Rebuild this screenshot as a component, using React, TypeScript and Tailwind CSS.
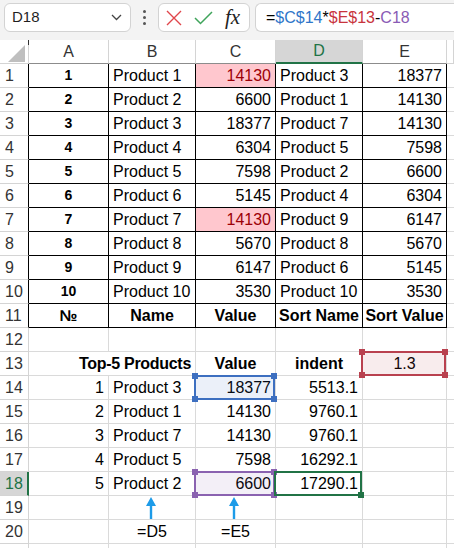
import React from "react";

type HL = "red" | "blue" | "purple" | "active";
type CellDef = {
  t?: React.ReactNode;
  align?: "l" | "c" | "r";
  bold?: boolean;
  small?: boolean;
  pink?: boolean;
  hl?: HL;
  noRight?: boolean;
  arrow?: number;
  tight?: boolean;
};

const products = [
  ["1", "Product 1", "14130", "Product 3", "18377"],
  ["2", "Product 2", "6600", "Product 1", "14130"],
  ["3", "Product 3", "18377", "Product 7", "14130"],
  ["4", "Product 4", "6304", "Product 5", "7598"],
  ["5", "Product 5", "7598", "Product 2", "6600"],
  ["6", "Product 6", "5145", "Product 4", "6304"],
  ["7", "Product 7", "14130", "Product 9", "6147"],
  ["8", "Product 8", "5670", "Product 8", "5670"],
  ["9", "Product 9", "6147", "Product 6", "5145"],
  ["10", "Product 10", "3530", "Product 10", "3530"],
];

const top5 = [
  ["1", "Product 3", "18377", "5513.1"],
  ["2", "Product 1", "14130", "9760.1"],
  ["3", "Product 7", "14130", "9760.1"],
  ["4", "Product 5", "7598", "16292.1"],
  ["5", "Product 2", "6600", "17290.1"],
];

function buildRows(): CellDef[][] {
  const rows: CellDef[][] = [];
  products.forEach((p) => {
    rows.push([
      { t: p[0], align: "c", bold: true, small: true },
      { t: p[1], align: "l" },
      { t: p[2], align: "r", pink: p[2] === "14130" },
      { t: p[3], align: "l" },
      { t: p[4], align: "r" },
    ]);
  });
  rows.push([
    { t: "№", align: "c", bold: true },
    { t: "Name", align: "c", bold: true },
    { t: "Value", align: "c", bold: true },
    { t: "Sort Name", align: "c", bold: true },
    { t: "Sort Value", align: "c", bold: true },
  ]);
  rows.push([{}, {}, {}, {}, {}]);
  rows.push([
    { noRight: true },
    { t: "Top-5 Products", align: "r", bold: true, tight: true },
    { t: "Value", align: "c", bold: true },
    { t: "indent", align: "c", bold: true },
    { t: "1.3", align: "c", hl: "red" },
  ]);
  top5.forEach((p, i) => {
    rows.push([
      { t: p[0], align: "r" },
      { t: p[1], align: "l" },
      { t: p[2], align: "r", hl: i === 0 ? "blue" : i === 4 ? "purple" : undefined },
      { t: p[3], align: "r", hl: i === 4 ? "active" : undefined },
      {},
    ]);
  });
  rows.push([{}, { arrow: 36 }, { arrow: 32 }, {}, {}]);
  rows.push([{}, { t: "=D5", align: "c" }, { t: "=E5", align: "c" }, {}, {}]);
  rows.push([{}, {}, {}, {}, {}]);
  return rows;
}

const hlStyles: Record<HL, { box: string; sq: string }> = {
  red: { box: "border-[#b9414f] bg-[#b9414f]/10", sq: "bg-[#b9414f]" },
  blue: { box: "border-[#3d6fc0] bg-[#3d6fc0]/10", sq: "bg-[#3d6fc0]" },
  purple: { box: "border-[#8a62b0] bg-[#8a62b0]/10", sq: "bg-[#8a62b0]" },
  active: { box: "border-[#217346]", sq: "bg-[#217346]" },
};

function Highlight({ kind }: { kind: HL }) {
  const s = hlStyles[kind];
  return (
    <div className={`pointer-events-none absolute -left-[2px] right-0 -top-[1px] -bottom-[1px] z-10 border-2 ${s.box}`}>
      {kind === "active" ? (
        <div className={`absolute -right-[4px] -bottom-[4px] h-[6px] w-[6px] ${s.sq}`} />
      ) : (
        <>
          <div className={`absolute -left-[4px] -top-[4px] h-[6px] w-[6px] ${s.sq}`} />
          <div className={`absolute -right-[4px] -top-[4px] h-[6px] w-[6px] ${s.sq}`} />
          <div className={`absolute -left-[4px] -bottom-[4px] h-[6px] w-[6px] ${s.sq}`} />
          <div className={`absolute -right-[4px] -bottom-[4px] h-[6px] w-[6px] ${s.sq}`} />
        </>
      )}
    </div>
  );
}

function UpArrow() {
  return (
    <svg width="12" height="23" viewBox="0 0 12 23">
      <path d="M6 1 L11 10 L7.2 10 L7.2 23 L4.8 23 L4.8 10 L1 10 Z" fill="#1d9be8" />
    </svg>
  );
}

export default function App() {
  const rows = buildRows();
  const colLetters = ["A", "B", "C", "D", "E", ""];
  const gray = "border-[#dadada]";

  return (
    <div
      className="w-[454px] h-[548px] overflow-hidden bg-white text-black"
      style={{ fontFamily: '"Liberation Sans", Arial, sans-serif' }}
    >
      {/* Formula bar */}
      <div className="flex h-[40px] items-start gap-0 bg-[#f3f3f3] pt-[3px]">
        <div className="ml-[4px] flex h-[29px] w-[127px] items-center justify-between rounded-[6px] border border-[#d3d3d3] bg-white pl-[7px] pr-[8px]">
          <span className="text-[15px] text-[#1f1f1f]">D18</span>
          <svg width="11" height="7" viewBox="0 0 11 7">
            <path d="M1 1 L5.5 5.5 L10 1" fill="none" stroke="#444" strokeWidth="1.3" />
          </svg>
        </div>
        <div className="ml-[10px] flex h-[29px] w-[6px] flex-col items-center justify-center gap-[3px]">
          <div className="h-[3px] w-[3px] rounded-full bg-[#555]" />
          <div className="h-[3px] w-[3px] rounded-full bg-[#555]" />
          <div className="h-[3px] w-[3px] rounded-full bg-[#555]" />
        </div>
        <div className="ml-[11px] flex h-[29px] w-[92px] items-center rounded-[6px] border border-[#d3d3d3] bg-white pl-[7px]">
          <svg width="16" height="16" viewBox="0 0 16 16">
            <path d="M1 1 L15 15 M15 1 L1 15" stroke="#e0464b" strokeWidth="1.4" fill="none" />
          </svg>
          <svg className="ml-[12px]" width="19" height="14" viewBox="0 0 19 14">
            <path d="M1 7 L6.5 12.5 L18 1" stroke="#3fa45b" strokeWidth="1.5" fill="none" />
          </svg>
          <span
            className="ml-[12px] text-[21px] italic leading-none text-[#222]"
            style={{ fontFamily: '"Liberation Serif", "Times New Roman", serif' }}
          >
            fx
          </span>
        </div>
        <div className="ml-[5px] flex h-[29px] flex-1 items-center rounded-l-[6px] border border-r-0 border-[#d3d3d3] bg-white pl-[10px] text-[16px]">
          <span>=</span>
          <span className="text-[#2f76c9]">$C$14</span>
          <span>*</span>
          <span className="text-[#c8343d]">$E$13</span>
          <span>-</span>
          <span className="text-[#8a5bb5]">C18</span>
        </div>
      </div>

      {/* Grid */}
      <div className="grid grid-cols-[29px_80px_87px_80px_87px_84px_1fr] auto-rows-[24px] text-[16px]">
        {/* header row */}
        <div className="relative border-r border-b border-[#d4d4d4]">
          <div className="absolute right-[-1px] top-0 h-[5px] w-px bg-[#333]" />
          <svg className="absolute left-[8px] top-[5px]" width="17" height="17" viewBox="0 0 17 17">
            <path d="M17 0 L17 17 L0 17 Z" fill="#bfbfbf" />
          </svg>
        </div>
        {colLetters.map((l, i) => {
          const sel = l === "D";
          return (
            <div
              key={i}
              className={`flex items-center justify-center border-r ${
                sel
                  ? "bg-[#d6d6d6] text-[#217346] border-b-2 border-b-[#217346] border-r-[#d4d4d4]"
                  : "text-[#333] border-b border-b-[#8c8c8c] border-r-[#d4d4d4]"
              } ${i === 5 ? "border-b-[#d4d4d4]" : ""}`}
            >
              {l}
            </div>
          );
        })}

        {rows.map((row, ri) => {
          const rn = ri + 1;
          const inTable = rn <= 11;
          const sel = rn === 18;
          return (
            <React.Fragment key={ri}>
              <div
                className={`flex items-center pl-[5px] border-b border-b-[#d4d4d4] ${
                  sel
                    ? "bg-[#d6d6d6] text-[#217346] border-r-2 border-r-[#217346]"
                    : `text-[#333] border-r ${inTable ? "border-r-black" : "border-r-[#d4d4d4]"}`
                }`}
              >
                {rn <= 20 ? rn : null}
              </div>
              {row.map((c, ci) => {
                const bc = inTable ? "border-black" : gray;
                const al =
                  c.align === "c"
                    ? "justify-center"
                    : c.align === "r"
                    ? "justify-end pr-[4px]"
                    : "justify-start pl-[4px]";
                return (
                  <div
                    key={ci}
                    className={`relative flex items-center whitespace-nowrap border-b ${
                      c.noRight ? "" : "border-r"
                    } ${bc} ${al} ${c.pink ? "bg-[#ffc7ce] text-[#9c0006]" : ""} ${
                      c.bold ? "font-bold" : ""
                    } ${c.small ? "text-[14px]" : ""} ${c.tight ? "tracking-[-0.3px]" : ""}`}
                  >
                    {c.arrow !== undefined ? (
                      <div className="absolute top-0" style={{ left: c.arrow }}>
                        <UpArrow />
                      </div>
                    ) : null}
                    {c.t}
                    {c.hl ? <Highlight kind={c.hl} /> : null}
                  </div>
                );
              })}
              <div className={`border-b ${gray}`} />
            </React.Fragment>
          );
        })}
      </div>
    </div>
  );
}
